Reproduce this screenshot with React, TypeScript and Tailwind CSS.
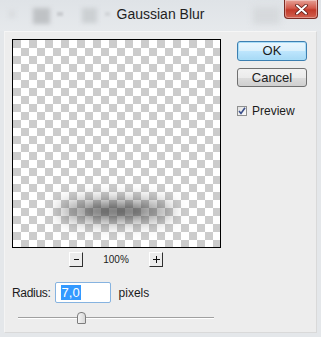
import React from "react";

export default function App() {
  return (
    <div className="relative w-[321px] h-[337px] overflow-hidden bg-[#e4e7ea] font-['Liberation_Sans',Arial,sans-serif] text-[#1b1b1b]">
      {/* Title bar */}
      <div className="relative h-[31px] bg-[linear-gradient(#dfe3e7,#e6e9ec)]">
        <div className="absolute left-[9px] top-[10px] w-[6px] h-[8px] bg-[#d9dcdf] blur-[2px]" />
        <div className="absolute left-[33px] top-[8px] w-[17px] h-[16px] bg-[#bfc2c5] blur-[2px]" />
        <div className="absolute left-[57px] top-[12px] w-[6px] h-[4px] bg-[#c8cbce] blur-[1px]" />
        <div className="absolute left-[82px] top-[8px] w-[15px] h-[15px] bg-[#ccd0d3] blur-[2px]" />
        <div className="absolute left-[105px] top-[12px] w-[5px] h-[4px] bg-[#d2d5d8] blur-[1px]" />
        <div className="absolute left-[253px] top-[7px] w-[27px] h-[17px] bg-[#d6d9dc] blur-[3px]" />
        <div className="relative flex h-full items-center justify-center pb-[3px] text-[14px] text-[#1e1e1e]">
          Gaussian Blur
        </div>
        <div className="absolute right-[3px] top-0 flex h-[19px] w-[34px] items-center justify-center rounded-b-[4px] border border-t-0 border-[#7a2a22] bg-[linear-gradient(#e7a196,#d35b4c_45%,#c23a2a_55%,#d2614f)] shadow-[inset_0_0_0_1px_rgba(255,255,255,0.35)]">
          <svg width="13" height="11" viewBox="0 0 13 11">
            <path d="M2 1.5 L11 9.5 M11 1.5 L2 9.5" stroke="#5b1a14" strokeWidth="3.6" strokeLinecap="round" />
            <path d="M2 1.5 L11 9.5 M11 1.5 L2 9.5" stroke="#ffffff" strokeWidth="2" strokeLinecap="round" />
          </svg>
        </div>
      </div>

      {/* Body */}
      <div className="mx-[4px] h-[302px] border-t border-l border-t-[#f6f6f6] border-l-[#f4f4f4] border-r border-b border-r-[#d9d9d9] border-b-[#d9d9d9] bg-[#ededed]">
        <div className="flex pl-[7px] pt-[7px]">
          {/* Left column */}
          <div className="flex w-[209px] flex-col">
            <div className="relative h-[209px] w-[209px] overflow-hidden border border-black bg-[conic-gradient(#ffffff_25%,#cccccc_0_50%,#ffffff_0_75%,#cccccc_0)] bg-[length:16px_16px]">
              <div className="absolute left-[45px] top-[160px] h-[22px] w-[116px] rounded-[50%] bg-[rgba(40,40,40,0.5)] blur-[8px]" />
              <div className="absolute left-[72px] top-[166px] h-[10px] w-[62px] rounded-[50%] bg-[rgba(40,40,40,0.35)] blur-[4px]" />
            </div>
            <div className="mt-[4px] flex items-center justify-center gap-[20px] pr-[1px]">
              <div className="flex h-[15px] w-[14px] items-center justify-center border border-[#ffffff] border-r-[#303030] border-b-[#303030] bg-[#ececec] text-[11px] leading-none">
                <div className="h-[1px] w-[5px] bg-[#111]" />
              </div>
              <div className="w-[26px] text-center text-[10px] leading-none">100%</div>
              <div className="flex h-[15px] w-[14px] items-center justify-center border border-[#ffffff] border-r-[#303030] border-b-[#303030] bg-[#ececec]">
                <svg width="7" height="7" viewBox="0 0 7 7">
                  <path d="M0 3.5 H7 M3.5 0 V7" stroke="#111" strokeWidth="1" />
                </svg>
              </div>
            </div>
            <div className="mt-[15px] flex items-center">
              <span className="text-[12px] tracking-[-0.3px]">Radius:</span>
              <div className="ml-[4px] flex h-[21px] w-[56px] items-center rounded-[2px] border border-[#86b3e0] bg-white pl-[5px]">
                <span className="bg-[#3399ff] px-[1px] text-[13px] leading-[15px] text-white">7,0</span>
              </div>
              <span className="ml-[8px] text-[12px]">pixels</span>
            </div>
            <div className="relative mt-[8px] ml-[6px] h-[14px] w-[196px]">
              <div className="absolute left-0 right-0 top-[6px] h-[2px] border-t border-t-[#a0a0a0] border-b border-b-[#ffffff]" />
              <div className="absolute left-[59px] top-[1px] h-[12px] w-[9px] rounded-t-[4px] rounded-b-[1px] border border-[#7d7d7d] bg-[linear-gradient(90deg,#f4f4f4,#d8d8d8)]" />
            </div>
          </div>

          {/* Right column */}
          <div className="ml-[16px] flex w-[70px] flex-col pt-[2px]">
            <div className="flex h-[20px] items-center justify-center rounded-[3px] border border-[#3c7fb1] bg-[linear-gradient(#eaf6fd,#d9f0fc_50%,#bee6fd_50%,#a7d9f5)] text-[13px] shadow-[inset_0_0_0_1px_#a9ddf7]">
              OK
            </div>
            <div className="mt-[7px] flex h-[19px] items-center justify-center rounded-[3px] border border-[#707070] bg-[linear-gradient(#f2f2f2,#ebebeb_50%,#dddddd_50%,#cfcfcf)] text-[13px]">
              Cancel
            </div>
            <div className="mt-[15px] flex items-center gap-[5px]">
              <div className="flex h-[10px] w-[10px] items-center justify-center border border-[#8e8f8f] bg-[linear-gradient(135deg,#e0e0e0,#fbfbfb)]">
                <svg width="8" height="8" viewBox="0 0 8 8">
                  <path d="M1 4 L3 6.5 L7 0.8" stroke="#3b4f8a" strokeWidth="1.6" fill="none" />
                </svg>
              </div>
              <span className="text-[12px]">Preview</span>
            </div>
          </div>
        </div>
      </div>
    </div>
  );
}
